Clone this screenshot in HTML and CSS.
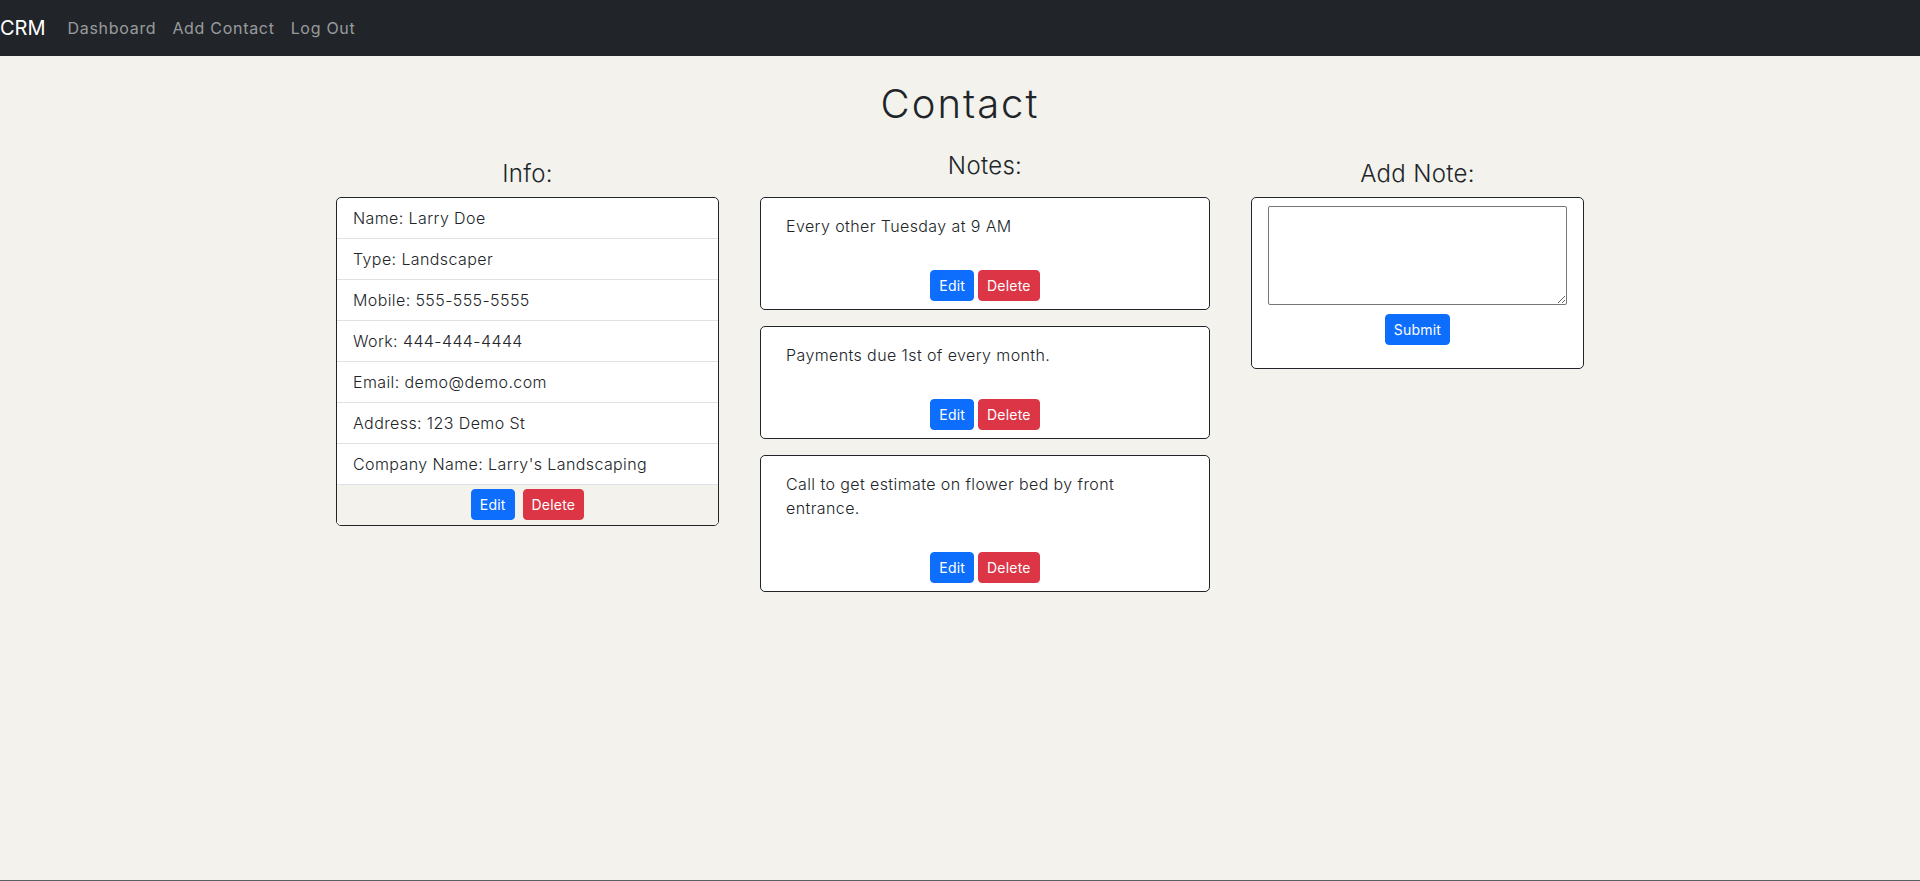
FILE: index.html
```html
<!DOCTYPE html>
<html lang="en">
<head>
<meta charset="utf-8">
<title>CRM - Contact</title>
<link rel="stylesheet" href="styles.css">
</head>
<body>
<nav class="navbar">
  <a class="brand" href="#">CRM</a>
  <a class="nav-link" href="#">Dashboard</a>
  <a class="nav-link" href="#">Add Contact</a>
  <a class="nav-link" href="#">Log Out</a>
</nav>
<main class="main">
  <h1 class="title">Contact</h1>
  <div class="columns">
    <section class="col col-info">
      <h4 class="col-title">Info:</h4>
      <div class="card">
        <ul class="list">
          <li class="list-item">Name: Larry Doe</li>
          <li class="list-item">Type: Landscaper</li>
          <li class="list-item">Mobile: 555-555-5555</li>
          <li class="list-item">Work: 444-444-4444</li>
          <li class="list-item">Email: demo@demo.com</li>
          <li class="list-item">Address: 123 Demo St</li>
          <li class="list-item">Company Name: Larry's Landscaping</li>
        </ul>
        <div class="card-footer">
          <button class="btn btn-primary">Edit</button>
          <button class="btn btn-danger">Delete</button>
        </div>
      </div>
    </section>
    <section class="col col-notes">
      <h4 class="col-title col-title-notes">Notes:</h4>
      <div class="note">
        <p class="note-text">Every other Tuesday at 9 AM</p>
        <div class="note-actions"><button class="btn btn-primary">Edit</button><button class="btn btn-danger">Delete</button></div>
      </div>
      <div class="note">
        <p class="note-text">Payments due 1st of every month.</p>
        <div class="note-actions"><button class="btn btn-primary">Edit</button><button class="btn btn-danger">Delete</button></div>
      </div>
      <div class="note">
        <p class="note-text">Call to get estimate on flower bed by front entrance.</p>
        <div class="note-actions"><button class="btn btn-primary">Edit</button><button class="btn btn-danger">Delete</button></div>
      </div>
    </section>
    <section class="col col-add">
      <h4 class="col-title">Add Note:</h4>
      <form class="card add-card">
        <textarea class="note-input"></textarea>
        <div class="add-actions"><button type="button" class="btn btn-primary">Submit</button></div>
      </form>
    </section>
  </div>
</main>
<footer class="footer"></footer>
</body>
</html>
```
FILE: styles.css
```css
html, body {
  margin: 0;
  padding: 0;
}
body {
  min-height: 100vh;
  display: flex;
  flex-direction: column;
  background: #f3f2ed;
  color: #212529;
  font-family: "Inter", "Open Sans", sans-serif;
  font-size: 16px;
  font-weight: 300;
  letter-spacing: 0.4px;
  line-height: 1.5;
}
.navbar {
  height: 56px;
  box-sizing: border-box;
  background: #212529;
  display: flex;
  align-items: center;
  padding: 8px 0;
}
.brand {
  color: #fff;
  font-size: 20px;
  font-weight: 400;
  letter-spacing: 0;
  text-decoration: none;
  padding: 5px 0;
  margin-right: 14px;
}
.nav-link {
  color: rgba(255,255,255,.55);
  font-weight: 400;
  letter-spacing: 0.7px;
  text-decoration: none;
  padding: 8px 8px;
}
.main {
  flex: 1;
}
.title {
  text-align: center;
  font-size: 40px;
  font-weight: 300;
  letter-spacing: 2px;
  line-height: 1.2;
  margin: 24px 0 32px;
}
.columns {
  display: flex;
  justify-content: center;
  align-items: flex-start;
  gap: 41px;
}
.col-info { width: 383px; }
.col-notes { width: 450px; margin-top: -8px; }
.col-add { width: 333px; }
.col-title {
  text-align: center;
  font-size: 24px;
  font-weight: 300;
  letter-spacing: 0.3px;
  line-height: 1.2;
  margin: 0 0 8px;
}
.col-title-notes { margin-bottom: 16px; }
.card {
  background: #fff;
  border: 1px solid #212529;
  border-radius: 5px;
  overflow: hidden;
}
.list {
  list-style: none;
  margin: 0;
  padding: 0;
}
.list-item {
  padding: 8px 16px;
  border-bottom: 1px solid #dee2e6;
}
.card-footer {
  background: #f3f2ed;
  padding: 4px 16px 5px;
  display: flex;
  justify-content: center;
  gap: 8px;
}
.btn {
  font-family: inherit;
  font-size: 14px;
  font-weight: 400;
  letter-spacing: 0.2px;
  line-height: 21px;
  padding: 4px 8px;
  border: 1px solid transparent;
  border-radius: 4px;
  color: #fff;
  cursor: pointer;
}
.btn-primary { background: #0d6efd; border-color: #0d6efd; }
.btn-danger { background: #dc3545; border-color: #dc3545; }
.note {
  background: #fff;
  border: 1px solid #212529;
  border-radius: 5px;
  padding: 16px 25px 8px;
  margin-bottom: 16px;
}
.note-text {
  max-width: 360px;
  margin: 0 0 32px;
}
.note-actions {
  display: flex;
  justify-content: center;
  gap: 4px;
}
.add-card {
  margin: 0;
  padding: 8px 16px 23px;
}
.note-input {
  display: block;
  box-sizing: border-box;
  width: 100%;
  height: 99px;
  border: 1px solid #767676;
  border-radius: 2px;
  margin: 0 0 9px;
}
.add-actions {
  display: flex;
  justify-content: center;
}
.footer {
  border-top: 1px solid #5c6066;
}
```
